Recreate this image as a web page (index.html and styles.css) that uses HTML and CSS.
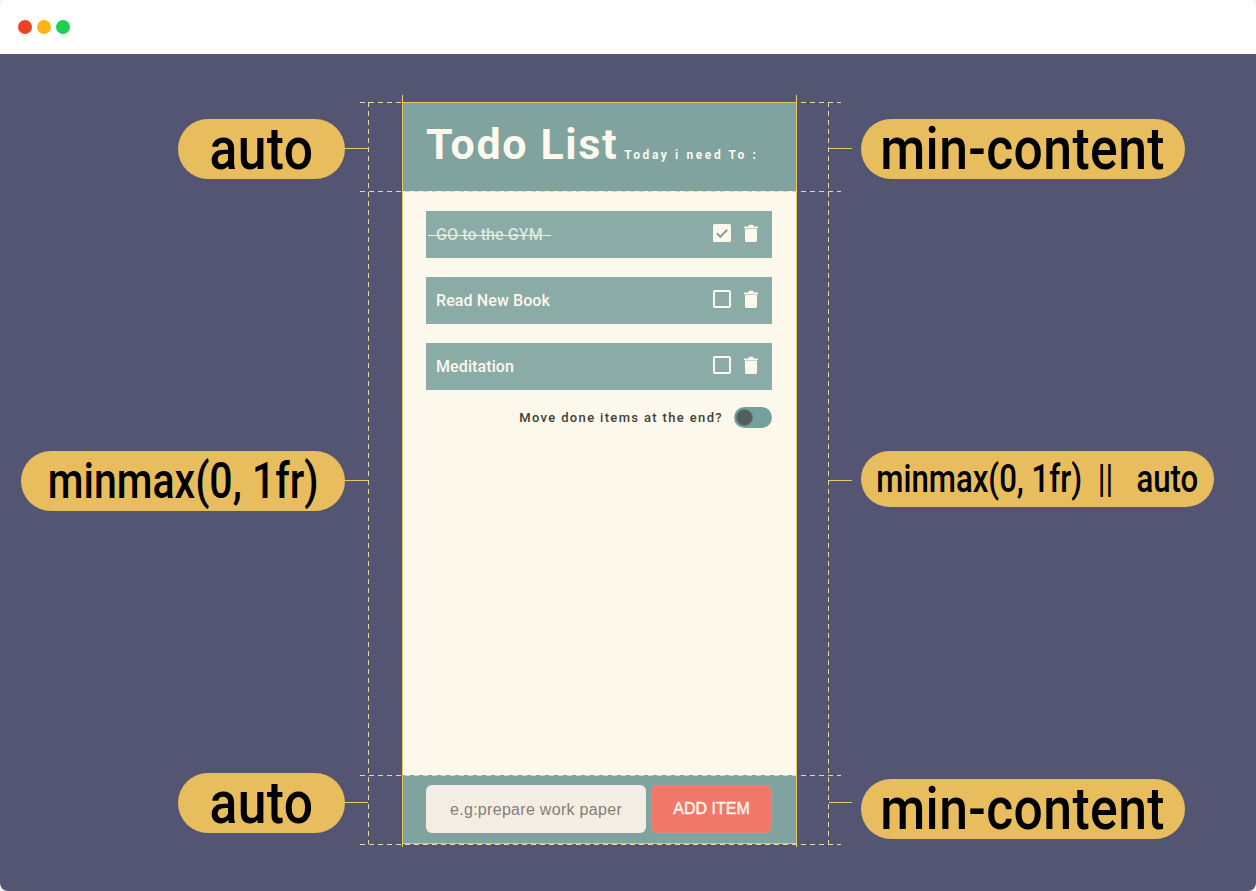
FILE: index.html
```html
<!DOCTYPE html>
<html>
<head>
	<title>Todo List</title>
	<link rel="stylesheet" href="styles.css">
</head>
<body>
<div class="window">
	<div class="titlebar">
		<span class="dot red"></span>
		<span class="dot yellow"></span>
		<span class="dot green"></span>
	</div>
	<div class="stage">
		<!-- the todo app -->
		<div class="app">
			<div class="app-head">
				<span class="app-title">Todo List</span>
				<span class="app-sub">Today i need To :</span>
			</div>
			<div class="app-body">
				<div class="item">
					<span class="item-text"><span class="done">GO to the GYM</span></span>
					<svg class="box" viewBox="0 0 18 18"><rect width="18" height="18" rx="1.5" fill="#fdf8ec"/><path d="M3.8 9.2l3.6 3.6 6.8-7" fill="none" stroke="#84a09c" stroke-width="2"/></svg>
					<svg class="trash" viewBox="0 0 14 18"><path d="M0 2.400h4.200L5 .8h4l.8 1.600H14v1.800H0zM1 4.800h12v11.400c0 1-.8 1.800-1.800 1.800H2.800c-1 0-1.800-.8-1.800-1.800z" fill="#fdf8ec"/></svg>
				</div>
				<div class="item">
					<span class="item-text">Read New Book</span>
					<svg class="box" viewBox="0 0 18 18"><rect x="1" y="1" width="16" height="16" rx="1" fill="none" stroke="#fdf8ec" stroke-width="2"/></svg>
					<svg class="trash" viewBox="0 0 14 18"><path d="M0 2.400h4.200L5 .8h4l.8 1.600H14v1.800H0zM1 4.800h12v11.400c0 1-.8 1.800-1.800 1.800H2.800c-1 0-1.800-.8-1.800-1.800z" fill="#fdf8ec"/></svg>
				</div>
				<div class="item">
					<span class="item-text">Meditation</span>
					<svg class="box" viewBox="0 0 18 18"><rect x="1" y="1" width="16" height="16" rx="1" fill="none" stroke="#fdf8ec" stroke-width="2"/></svg>
					<svg class="trash" viewBox="0 0 14 18"><path d="M0 2.400h4.200L5 .8h4l.8 1.600H14v1.800H0zM1 4.800h12v11.400c0 1-.8 1.800-1.800 1.800H2.800c-1 0-1.800-.8-1.800-1.800z" fill="#fdf8ec"/></svg>
				</div>
				<div class="move-row">
					<span class="move-text">Move done items at the end?</span>
					<span class="toggle"><span class="knob"></span></span>
				</div>
			</div>
			<div class="app-foot">
				<div class="add-input">e.g:prepare work paper</div>
				<div class="add-btn">ADD ITEM</div>
			</div>
		</div>

		<!-- annotations around the app -->
		<div class="guide h" style="top:48px"></div>
		<div class="guide h over" style="top:137px"></div>
		<div class="guide h over" style="top:721px"></div>
		<div class="guide h" style="top:790px"></div>
		<div class="guide v" style="left:368px"></div>
		<div class="guide v" style="left:828px"></div>

		<div class="stub top" style="left:402px"></div>
		<div class="stub top" style="left:796px"></div>
		<div class="stub bottom" style="left:402px"></div>
		<div class="stub bottom" style="left:796px"></div>

		<div class="tick" style="left:345px;top:94px"></div>
		<div class="tick" style="left:829px;top:94px"></div>
		<div class="tick" style="left:345px;top:426px"></div>
		<div class="tick" style="left:829px;top:426px"></div>
		<div class="tick" style="left:345px;top:748px"></div>
		<div class="tick" style="left:829px;top:748px"></div>

		<div class="pill big" style="left:178px;top:65px;width:167px"><span>auto</span></div>
		<div class="pill big" style="left:861px;top:65px;width:324px"><span>min-content</span></div>
		<div class="pill mid" style="left:21px;top:397px;width:324px"><span>minmax(0, 1fr)</span></div>
		<div class="pill small" style="left:861px;top:397px;width:353px"><span>minmax(0, 1fr)&nbsp; ||&nbsp; &nbsp;auto</span></div>
		<div class="pill big" style="left:178px;top:719px;width:167px"><span>auto</span></div>
		<div class="pill big" style="left:861px;top:725px;width:324px"><span>min-content</span></div>
	</div>
</div>
</body>
</html>
```

FILE: styles.css
```css
html, body {
	margin: 0;
	padding: 0;
	background: #f4f4f6;
}

.window {
	width: 1256px;
	height: 891px;
	display: flex;
	flex-direction: column;
	border-radius: 8px;
	overflow: hidden;
}

.titlebar {
	height: 54px;
	background: #ffffff;
	display: flex;
	align-items: center;
	gap: 5px;
	padding-left: 18px;
	box-sizing: border-box;
}

.dot {
	width: 14px;
	height: 14px;
	border-radius: 50%;
}
.red { background: #ec4422; }
.yellow { background: #fdb515; }
.green { background: #1bd14f; }

.stage {
	position: relative;
	flex: 1;
	background: #545572;
	padding: 48px 0 47px 402px;
	box-sizing: border-box;
}

.app {
	position: relative;
	z-index: 1;
	width: 395px;
	height: 742px;
	box-sizing: border-box;
	border: 1px solid #e8c766;
	display: grid;
	grid-template-rows: 88px minmax(0, 1fr) 68px;
}

.app-head {
	background: #80a3a0;
	display: flex;
	align-items: baseline;
	padding: 16px 0 0 23px;
	box-sizing: border-box;
	color: #fdf8ec;
}

.app-title {
	font-family: Roboto, sans-serif;
	font-size: 43px;
	font-weight: 700;
	letter-spacing: 1.6px;
	line-height: 50px;
}

.app-sub {
	font-family: Roboto, sans-serif;
	font-size: 12px;
	font-weight: 700;
	letter-spacing: 2.6px;
	margin-left: 6px;
}

.app-body {
	background: #fdf8ec;
	padding: 20px 24px 0 23px;
	display: flex;
	flex-direction: column;
	gap: 19px;
}

.item {
	height: 47px;
	background: #8aaba6;
	display: flex;
	align-items: center;
	padding: 0 14px 0 10px;
	color: #fdf8ec;
	flex-shrink: 0;
}

.item-text {
	flex: 1;
	font-family: Roboto, sans-serif;
	font-size: 16px;
	font-weight: 500;
	letter-spacing: 0.1px;
}

.done {
	position: relative;
	color: #dfe6dc;
}

/* the strike runs a little past the words */
.done::after {
	content: "";
	position: absolute;
	left: -8px;
	right: -8px;
	top: 10px;
	height: 1px;
	background: #eef0e6;
}

.box {
	width: 18px;
	height: 18px;
	margin: -3px 13px 0 0;
}

.trash {
	width: 14px;
	height: 18px;
	margin-top: -3px;
}

.move-row {
	display: flex;
	justify-content: flex-end;
	align-items: center;
	gap: 11px;
	margin-top: -2px;
}

.move-text {
	font-family: Roboto, sans-serif;
	font-size: 13px;
	font-weight: 500;
	letter-spacing: 1.35px;
	color: #3f3f38;
}

.toggle {
	width: 38px;
	height: 21px;
	border-radius: 11px;
	background: #74a19c;
	display: flex;
	align-items: center;
}

.knob {
	width: 17px;
	height: 17px;
	margin-left: 2px;
	border-radius: 50%;
	background: #545f5b;
	border: 1px solid #5e7a76;
	box-sizing: border-box;
}

.app-foot {
	background: #80a3a0;
	display: flex;
	gap: 5px;
	padding: 10px 24px 0 23px;
}

.add-input {
	width: 220px;
	height: 48px;
	line-height: 49px;
	text-align: center;
	border-radius: 6px;
	background: #f4ede4;
	color: #857f78;
	font-family: "Liberation Sans", sans-serif;
	font-size: 16px;
	letter-spacing: 0.3px;
}

.add-btn {
	width: 121px;
	height: 48px;
	line-height: 46px;
	text-align: center;
	box-sizing: border-box;
	border: 1px solid #de8a80;
	border-radius: 6px;
	background: #f0776a;
	color: #fdf8ec;
	font-family: "Liberation Sans", sans-serif;
	font-size: 16px;
	-webkit-text-stroke: 0.4px #fdf8ec;
}

.guide {
	position: absolute;
}
.guide.over {
	z-index: 2;
}
.guide.h {
	left: 360px;
	width: 481px;
	height: 1px;
	background: repeating-linear-gradient(90deg, #e8d9a0 0 5px, transparent 5px 9px);
}
.guide.v {
	top: 48px;
	height: 742px;
	width: 1px;
	background: repeating-linear-gradient(180deg, #e8d9a0 0 5px, transparent 5px 9px);
}

.stub {
	position: absolute;
	width: 1px;
	background: #e8d48a;
}
.stub.top {
	top: 41px;
	height: 7px;
}
.stub.bottom {
	top: 790px;
	height: 3px;
}

.tick {
	position: absolute;
	width: 23px;
	height: 1px;
	background: #e8c766;
}

.pill {
	position: absolute;
	z-index: 3;
	height: 60px;
	line-height: 60px;
	text-align: center;
	border-radius: 30px;
	background: #e8bd5e;
	color: #000000;
	font-family: Roboto, sans-serif;
	font-weight: 500;
	white-space: nowrap;
	display: flex;
	justify-content: center;
}
/* the label font is narrower than anything installed, so squeeze it */
.pill span {
	display: block;
}
.pill.big {
	font-size: 60px;
	letter-spacing: 0.5px;
}
.pill.big span {
	transform: scaleX(0.86);
}
.pill.mid {
	font-size: 50px;
}
.pill.mid span {
	transform: scaleX(0.82);
}
.pill.small {
	height: 56px;
	line-height: 56px;
	font-size: 38px;
}
.pill.small span {
	transform: scaleX(0.82);
}
```
